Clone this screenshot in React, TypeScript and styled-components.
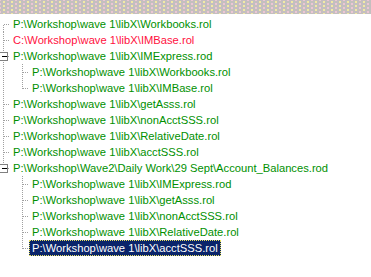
import React from "react";
import styled, { createGlobalStyle, css } from "styled-components";

const GlobalStyle = createGlobalStyle`
  html, body {
    margin: 0;
    padding: 0;
    background: #ffffff;
  }
`;

type Item = {
  label: string;
  level: number;
  red?: boolean;
  selected?: boolean;
  expanded?: boolean;
  last?: boolean;
  // whether the ancestor column still has siblings below
  ancestorsOpen?: boolean[];
};

const items: Item[] = [
  { label: "P:\\Workshop\\wave 1\\libX\\Workbooks.rol", level: 0 },
  { label: "C:\\Workshop\\wave 1\\libX\\IMBase.rol", level: 0, red: true },
  { label: "P:\\Workshop\\wave 1\\libX\\IMExpress.rod", level: 0, expanded: true },
  { label: "P:\\Workshop\\wave 1\\libX\\Workbooks.rol", level: 1, ancestorsOpen: [true] },
  { label: "P:\\Workshop\\wave 1\\libX\\IMBase.rol", level: 1, last: true, ancestorsOpen: [true] },
  { label: "P:\\Workshop\\wave 1\\libX\\getAsss.rol", level: 0 },
  { label: "P:\\Workshop\\wave 1\\libX\\nonAcctSSS.rol", level: 0 },
  { label: "P:\\Workshop\\wave 1\\libX\\RelativeDate.rol", level: 0 },
  { label: "P:\\Workshop\\wave 1\\libX\\acctSSS.rol", level: 0 },
  {
    label: "P:\\Workshop\\Wave2\\Daily Work\\29 Sept\\Account_Balances.rod",
    level: 0,
    expanded: true,
    last: true,
  },
  { label: "P:\\Workshop\\wave 1\\libX\\IMExpress.rod", level: 1, ancestorsOpen: [false] },
  { label: "P:\\Workshop\\wave 1\\libX\\getAsss.rol", level: 1, ancestorsOpen: [false] },
  { label: "P:\\Workshop\\wave 1\\libX\\nonAcctSSS.rol", level: 1, ancestorsOpen: [false] },
  { label: "P:\\Workshop\\wave 1\\libX\\RelativeDate.rol", level: 1, ancestorsOpen: [false] },
  {
    label: "P:\\Workshop\\wave 1\\libX\\acctSSS.rol",
    level: 1,
    last: true,
    selected: true,
    ancestorsOpen: [false],
  },
];

const ROW = 16;
const STEP = 19;
const LINE = "#a0a0a0";

const Window = styled.div`
  width: 371px;
  height: 277px;
  overflow: hidden;
  background: #ffffff;
  display: flex;
  flex-direction: column;
`;

const Band = styled.div`
  height: 14px;
  flex: none;
  background-color: #c4bfbf;
  background-image: radial-gradient(circle, #f2eaa4 1.1px, transparent 1.3px),
    radial-gradient(circle, #edc6d4 1.1px, transparent 1.3px);
  background-size: 8px 4px, 8px 4px;
  background-position: 0 0, 4px 2px;
`;

const Tree = styled.ul`
  list-style: none;
  margin: 0;
  padding: 2px 0 0 0;
  display: flex;
  flex-direction: column;
`;

const Row = styled.li`
  height: ${ROW}px;
  display: flex;
  align-items: stretch;
`;

const Label = styled.span<{ $red?: boolean; $selected?: boolean }>`
  font-family: "Liberation Sans", Arial, sans-serif;
  font-size: 11.2px;
  line-height: 14px;
  white-space: nowrap;
  padding: 0 2px;
  margin-left: 1px;
  border: 1px solid transparent;
  color: ${({ $red }) => ($red ? "#ff1040" : "#009000")};
  ${({ $selected }) =>
    $selected &&
    css`
      background: #0a246a;
      color: #ffffff;
      border: 1px dotted #e8e060;
    `}
`;

const Gutter: React.FC<{ item: Item; first: boolean }> = ({ item, first }) => {
  const w = 9 + STEP * item.level;
  const mid = ROW / 2 + 0.5;
  const x = 3.5 + STEP * item.level;
  const dash = { stroke: LINE, strokeDasharray: "1 1", strokeWidth: 1 };
  return (
    <svg width={w} height={ROW} style={{ flex: "none" }} shapeRendering="crispEdges">
      {(item.ancestorsOpen || []).map((open, i) =>
        open ? (
          <line key={i} x1={3.5 + STEP * i} y1={0} x2={3.5 + STEP * i} y2={ROW} {...dash} />
        ) : null
      )}
      <line x1={x} y1={first ? mid : 0} x2={x} y2={item.last ? mid : ROW} {...dash} />
      <line x1={x} y1={mid} x2={w} y2={mid} {...dash} />
      {item.expanded && (
        <g>
          <rect x={x - 4} y={mid - 4} width={8} height={8} fill="#ffffff" stroke="#808080" />
          <line x1={x - 2} y1={mid} x2={x + 3} y2={mid} stroke="#000000" />
          <line x1={x + STEP} y1={mid + 4} x2={x + STEP} y2={ROW} {...dash} />
        </g>
      )}
    </svg>
  );
};

export default function App() {
  return (
    <>
      <GlobalStyle />
      <Window>
        <Band />
        <Tree>
          {items.map((item, i) => (
            <Row key={i}>
              <Gutter item={item} first={i === 0} />
              <Label $red={item.red} $selected={item.selected}>
                {item.label}
              </Label>
            </Row>
          ))}
        </Tree>
      </Window>
    </>
  );
}
